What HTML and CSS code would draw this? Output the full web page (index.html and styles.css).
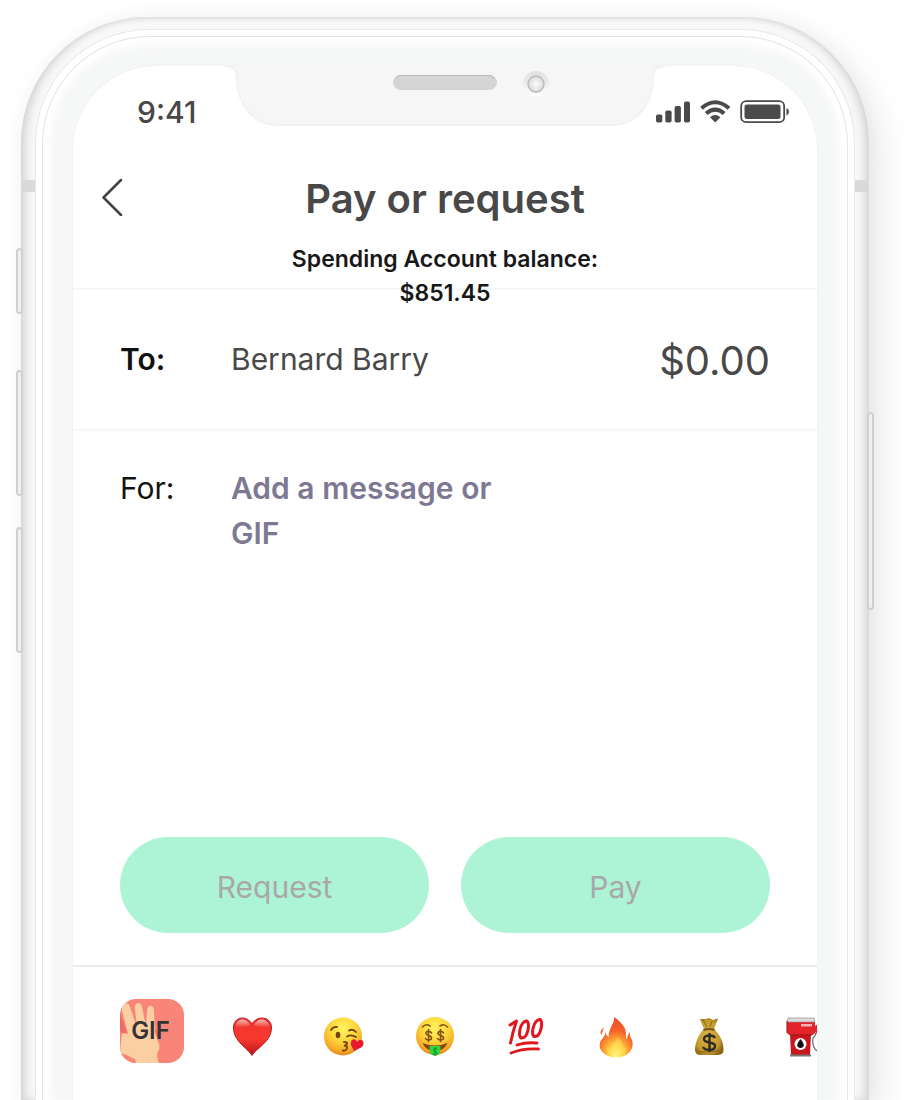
FILE: index.html
```html
<!DOCTYPE html>
<html lang="en">
<head>
<meta charset="utf-8">
<meta name="viewport" content="width=device-width, initial-scale=1">
<title>Pay or request</title>
<link rel="stylesheet" href="styles.css">
</head>
<body>
<div class="stage">
<div class="phone">
  <span class="key key-mute"></span>
  <span class="key key-up"></span>
  <span class="key key-down"></span>
  <span class="key key-power"></span>
  <span class="band band-left"></span>
  <span class="band band-right"></span>
  <div class="rim">
  <div class="bezel">
  <main class="screen">
    <div class="notch">
      <svg class="notch-shape" viewBox="0 0 440 62" aria-hidden="true">
        <defs><pattern id="mesh" width="4" height="4" patternUnits="userSpaceOnUse"><rect width="4" height="4" fill="#d7d7d7"/><path d="M0 4L4 0" stroke="#cecece" stroke-width="1"/></pattern>
        <linearGradient id="ring" x2="0" y2="1"><stop stop-color="#dedede"/><stop offset="1" stop-color="#fff"/></linearGradient>
        <radialGradient id="lens"><stop stop-color="#fff"/><stop offset="1" stop-color="#d8d8d8"/></radialGradient></defs>
        <path d="M0 0C10 0 12 6 12 14C13 40 29 60 54 60H386C411 60 427 40 428 14C428 6 430 0 440 0Z" fill="#f6f6f6"/>
        <path d="M0 0C10 0 12 6 12 14C13 40 29 59 54 59H386C411 59 427 40 428 14C428 6 430 0 440 0" fill="none" stroke="#f1f2f2" stroke-width="2"/>
        <rect x="13" y="-2" width="414" height="10" fill="#f6f6f6"/>
        <rect x="168" y="9" width="104" height="15" rx="7.500" fill="url(#mesh)"/>
        <path d="M171 13C172 10 174 9.500 177 9.500H263C266 9.500 268 10 269 13" fill="none" stroke="#b8b8b8"/>
        <circle cx="311" cy="18" r="13" fill="url(#ring)"/>
        <circle cx="311" cy="18" r="8" fill="url(#lens)" stroke="#bcbcbc" stroke-width="1.500"/>
      </svg>
    </div>
    <div class="status">
      <time class="clock">9:41</time>
      <svg class="indicators" viewBox="0 0 134 26" aria-label="Signal, Wi-Fi and battery">
        <g fill="#4a4a4a">
          <rect x="0" y="15.500" width="6.300" height="8" rx="1.800"/><rect x="9.300" y="11.500" width="6.300" height="12" rx="1.800"/><rect x="18.600" y="7" width="6.300" height="16.500" rx="1.800"/><rect x="28" y="2.500" width="6" height="21" rx="1.800"/>
          <path d="M54 18.200q5.200-4.400 10.400 0L59.200 23.500z"/>
          <rect x="88.500" y="5.500" width="36" height="14.500" rx="2.500"/>
          <path d="M130.500 9c3.200 1.500 3.200 6 0 7.500z"/>
        </g>
        <g fill="none" stroke="#4a4a4a">
          <path d="M45.500 9.300Q59.200-2.800 73 9.300" stroke-width="4"/>
          <path d="M50.200 14.500Q59.200 6.800 68.200 14.500" stroke-width="4"/>
          <rect x="85.200" y="2.200" width="43" height="21" rx="5" stroke-width="1.800"/>
        </g>
      </svg>
    </div>
    <header class="header">
      <button class="back" type="button" aria-label="Back"><svg viewBox="0 0 22 38"><path d="M20 2L2.500 19.500L20 37" fill="none" stroke="#444" stroke-width="2.500" stroke-linecap="round" stroke-linejoin="round"/></svg></button>
      <h1 class="title">Pay or request</h1>
      <p class="balance">Spending Account balance:<br>$851.45</p>
    </header>
    <form class="form">
      <div class="row row-to">
        <label class="label label-strong" for="to">To:</label>
        <input class="recipient" id="to" type="text" value="Bernard Barry">
        <input class="amount" type="text" aria-label="Amount" value="$0.00">
      </div>
      <div class="row row-for">
        <label class="label" for="message">For:</label>
        <textarea class="message" id="message" rows="2" placeholder="Add a message or GIF"></textarea>
      </div>
      <div class="actions">
        <button class="action" type="button">Request</button>
        <button class="action" type="button">Pay</button>
      </div>
    </form>
    <div class="shelf">
      <button class="gif" type="button">
        <svg class="gif-hand" viewBox="0 0 64 64" aria-hidden="true">
          <path d="M0 14L6 32L4 36L0 32ZM11 28L16 26L18 36L12 36ZM22 26L27 25V36H23ZM34 30L37 32L39 44L35 42Z" fill="#ee6a66"/>
          <path d="M0 64V52L2 34C5 34 7 36 8 34L2 12C1 5 8 1 10 8L17 28L15 10C14 3 21 2 22 8L26 27L27 12C27 5 34 5 34 12L35 30C35 38 41 44 39 51C37 54 36 57 39 64Z" fill="#fbcfa2"/>
          <path d="M0 54C7 55 11 59 15 60L16 64H0Z" fill="#f98478"/>
        </svg>
        <span class="gif-text">GIF</span>
      </button>
      <button class="emoji" type="button" aria-label="Heart"><svg viewBox="0 0 40 40">
        <defs><linearGradient id="h" x2="0" y2="1"><stop stop-color="#e9342b"/><stop offset=".55" stop-color="#fb392f"/><stop offset="1" stop-color="#b8141b"/></linearGradient><linearGradient id="hs" x2="0" y2="1"><stop stop-color="#fff" stop-opacity=".65"/><stop offset="1" stop-color="#fff" stop-opacity="0"/></linearGradient></defs>
        <path d="M19 38.500C16 32 .5 25 .5 11C.5-1 14-2 19 7C24-2 38.500-1 38.500 11C38.500 25 22 32 19 38.500Z" fill="url(#h)" stroke="#bd1b1d"/>
        <path d="M2.500 10C3 1 13 0 17 8Q9 12 2.500 10ZM21 8C25 0 35 1 36.500 10Q30 12 21 8Z" fill="url(#hs)"/></svg></button>
      <button class="emoji" type="button" aria-label="Face blowing a kiss"><svg viewBox="0 0 40 40">
        <defs><radialGradient id="face" cx=".5" cy=".3" r=".72"><stop stop-color="#fff262"/><stop offset=".45" stop-color="#fdd93c"/><stop offset=".8" stop-color="#f5ab27"/><stop offset="1" stop-color="#df821c"/></radialGradient></defs>
        <circle cx="19" cy="19.500" r="19" fill="url(#face)"/>
        <g fill="none" stroke="#75420f" stroke-width="1.800" stroke-linecap="round"><path d="M7 13Q9 9.500 13 10M25 13.500Q29 11.500 32 15M23 19.500Q27 17 32 20"/><path d="M20 25Q24 25 23 27Q22 29 20 28.500Q24 29 23 31.500Q22 34 19 33.500"/></g>
        <ellipse cx="14" cy="18" rx="2.300" ry="3.300" fill="#75420f"/>
        <path d="M30 34C29 30 26 29 27 25C28 21 32 22 33 25C36 21 40 23 39.500 27C39 31 33 32 30 34Z" fill="#e8192e"/></svg></button>
      <button class="emoji" type="button" aria-label="Money-mouth face"><svg viewBox="0 0 40 40">
        <circle cx="20" cy="19" r="19" fill="url(#face)"/>
        <g fill="none" stroke="#865015" stroke-width="1.600" stroke-linecap="round"><path d="M7.500 10Q11 6 15 9M25 9Q29 6 32.500 10"/>
        <path d="M16.500 16C15 13.500 10.500 14 11 16.500C11 19 16.500 18 16.500 21C16.500 23.500 11.500 23.500 10.500 21.500M13.500 12.500V24.500M28.500 16C27 13.500 22.500 14 23 16.500C23 19 28.500 18 28.500 21C28.500 23.500 23.500 23.500 22.500 21.500M25.500 12.500V24.500"/></g>
        <path d="M7.500 26Q20 31 32.500 26Q29 34 20 34T7.500 26Z" fill="#874513"/>
        <path d="M14.500 29H25.500L25 36Q20 42 15 36Z" fill="#2ed73e"/><path d="M22.500 32.500C20.500 30.500 18 32 18.500 33.500S22.500 34 22 36.500S18.500 37.500 17.500 36M20 30V38.500" fill="none" stroke="#16882a"/></svg></button>
      <button class="emoji" type="button" aria-label="Hundred points"><svg viewBox="0 0 40 40">
        <g fill="none" stroke="#df1720" stroke-linecap="round" stroke-linejoin="round" stroke-width="3"><path d="M4 8L10.500 4Q7 14 4.500 26"/><path d="M21 4C14 4 11 21 16 21C22 21 25 4 20 4M34.500 2.500C27 2.500 24 19.500 29 19.500C35 19.500 38 3 33.500 2.500"/><path d="M11 28Q20 25 31 26M5 36Q17 31 32.500 32" stroke-width="2.800"/></g></svg></button>
      <button class="emoji" type="button" aria-label="Fire"><svg viewBox="0 0 40 40">
        <defs><radialGradient id="fire" cx=".5" cy=".92" r=".85"><stop stop-color="#fffbb0"/><stop offset=".2" stop-color="#ffe050"/><stop offset=".45" stop-color="#fda132"/><stop offset=".7" stop-color="#f5602a"/><stop offset="1" stop-color="#f0522a"/></radialGradient></defs>
        <path d="M17 0C18 6 12 10 11.500 20C10 19 9 17 8 15C9 20 4 21 3 26C1 33 8 40 18 40.500C30 41 37 33 35.500 25C35 21 32 20 33 15C30 18 31 21 29 22C30 12 27 7 17 0ZM7 10L4.500 18C2 14 5 13 7 10Z" fill="url(#fire)"/>
        <path d="M20 20C20 25 14 28 13 33C11 32 12 30 11 29C7 37 15 39 20 39S31 36 28 29C27 32 26 31 26 29C26 24 22 22 20 20Z" fill="#ffe453" opacity=".5"/></svg></button>
      <button class="emoji" type="button" aria-label="Money bag"><svg viewBox="0 0 40 40">
        <defs><radialGradient id="bag" cx=".45" cy=".5" r=".6"><stop stop-color="#dbb349"/><stop offset=".7" stop-color="#c39a2c"/><stop offset="1" stop-color="#896515"/></radialGradient></defs>
        <path d="M12 2L18 2L21 1L25 3L30 1.500L26 12C32 18 36 25 35.500 34Q35 38 29 38H13Q7 38 7 33C7 25 11 17 16 12Z" fill="url(#bag)"/>
        <path d="M15 12Q21 10 27 12L26 14Q21 12 16 14Z" fill="#77591a"/><path d="M15 3L19 10M24 4L22 10M8 33Q12 37 34 33" fill="none" stroke="#8b681c"/>
        <path d="M27 21C25 17 16 18 16 22C16 27 27 24 27 29C27 34 17 34 15 30M21.500 16V35" fill="none" stroke="#302d25" stroke-width="2.400"/></svg></button>
      <button class="emoji" type="button" aria-label="Fuel pump"><svg viewBox="0 0 40 40">
        <path d="M11 17H32L31 38H12Z" fill="#c9171e"/><path d="M8 4H36V16L34 18H10L8 16Z" fill="#e4242b"/><path d="M9 1H35L36 5H8Z" fill="#ddd" stroke="#8d8d8d" stroke-width=".7"/><path d="M8 4V16M11 18H33" stroke="#8e1519"/>
        <rect x="22" y="7" width="11" height="2.500" fill="#f4b4b1"/><path d="M11 37.500H32V39.500H11Z" fill="#777"/>
        <circle cx="21.500" cy="27" r="6" fill="#fff"/><path d="M21.500 22Q15 30 21.500 31Q28 30 21.500 22Z" fill="#111"/>
        <path d="M36 16Q38 17 34 21C33 27 35 35 41 34" fill="none" stroke="#777" stroke-width="1.300"/><path d="M36 9L39 7L41 12L38 17L36 15Z" fill="#dd2631"/></svg></button>
    </div>
  </main>
  </div>
  </div>
</div>
</div>
</body>
</html>
```
FILE: styles.css
```css
* { box-sizing: border-box; }
body { margin: 0; background: #fff; font-family: Inter, "Liberation Sans", sans-serif; color: #484848; }
button, input, textarea { font: inherit; color: inherit; background: none; border: 0; padding: 0; margin: 0; }
button { cursor: pointer; }
svg { display: block; }

.stage { display: flex; min-height: 100vh; padding: 17px 43px 0 21px; overflow: hidden; }
.phone {
  position: relative; flex: 1; min-width: 0; display: flex; padding: 12px 14px 0;
  border-radius: 126px 126px 0 0; background: #f8f8f8;
  box-shadow: 14px 12px 32px rgba(0,0,0,.08), 0 0 22px rgba(0,0,0,.04), inset 7px 0 10px -3px #d2d2d2, inset -7px 0 10px -3px #d2d2d2, inset 0 2px 3px #ececec;
}
.rim { flex: 1; min-width: 0; display: flex; padding: 6px 6px 0; border: 1px solid #e8e8e8; border-bottom: 0; border-radius: 114px 114px 0 0; background: #fff; }
.bezel {
  flex: 1; min-width: 0; display: flex; padding: 29px 30px 0; border: 1px solid #e4e4e4; border-bottom: 0;
  border-radius: 108px 108px 0 0; background: #f6f7f7; box-shadow: inset 12px 0 8px -4px #fff, inset -12px 0 8px -4px #fff, inset 0 12px 8px -4px #fff;
}
.screen { position: relative; flex: 1; min-width: 0; display: flex; flex-direction: column; background: #fff; border-radius: 84px 84px 0 0; box-shadow: 0 0 2px #e8eaea; }

.key { position: absolute; width: 7px; border: 2px solid #d0d0d0; border-radius: 4px; background: #f0f0f0; }
.key-mute { left: -5px; top: 231px; height: 66px; }
.key-up { left: -5px; top: 353px; height: 126px; }
.key-down { left: -5px; top: 510px; height: 126px; }
.key-power { right: -5px; top: 395px; height: 198px; }
.band { position: absolute; top: 163px; width: 14px; height: 12px; background: #dadada; }
.band-left { left: 0; }
.band-right { right: 0; }

.notch { position: absolute; top: 0; left: 0; right: 0; display: flex; justify-content: center; }
.notch-shape { width: 440px; height: 62px; overflow: visible; }
.status { display: flex; align-items: center; justify-content: space-between; padding: 28px 27px 0 64px; }
.clock { font-size: 30px; line-height: 36px; font-weight: 500; }
.indicators { width: 134px; height: 26px; }

.header { position: relative; padding: 45px 0 0; border-bottom: 2px solid #f6f6f7; text-align: center; }
.back { position: absolute; left: 28px; top: 48px; }
.back svg { width: 22px; height: 38px; }
.title { margin: 0; font-size: 40px; line-height: 48px; font-weight: 600; }
.balance { position: relative; margin: 19px 0 -22px; font-size: 23px; line-height: 34px; font-weight: 600; color: #181818; }

.form { flex: 1; display: flex; flex-direction: column; }
.row { display: flex; align-items: flex-start; padding: 0 47px; font-size: 30px; line-height: 45px; }
.row-to { padding-top: 47px; padding-bottom: 47px; border-bottom: 2px solid #f7f7f7; }
.row-for { flex: 1; padding-top: 35px; }
.label { flex: none; width: 111px; color: #111; }
.label-strong { font-weight: 600; }
.recipient { flex: 1; min-width: 0; height: 45px; }
.amount { width: 140px; height: 48px; font-size: 40px; line-height: 48px; margin-bottom: -3px; text-align: right; }
.message { width: 290px; height: 90px; resize: none; font-weight: 600; line-height: 45px; overflow: hidden; }
.message::placeholder { color: #7d7993; opacity: 1; }
.actions { display: grid; grid-template-columns: 1fr 1fr; gap: 32px; padding: 0 47px 32px; }
.action { height: 96px; padding-top: 3px; border-radius: 48px; background: #adf4d6; color: #a8a8a8; font-size: 30px; }

.shelf { display: flex; align-items: center; gap: 51px; height: 135px; padding: 0 0 6px 47px; border-top: 2px solid #ebebeb; overflow: hidden; }
.gif { position: relative; flex: none; width: 64px; height: 64px; margin-right: -2px; border-radius: 16px; background: #f98478; overflow: hidden; }
.gif-hand { width: 64px; height: 64px; }
.gif-text { position: absolute; inset: 0; padding-right: 3px; line-height: 64px; font-size: 24px; font-weight: 600; color: #333; }
.emoji { flex: none; padding-top: 12px; }
.emoji svg { width: 40px; height: 40px; overflow: visible; }
```
